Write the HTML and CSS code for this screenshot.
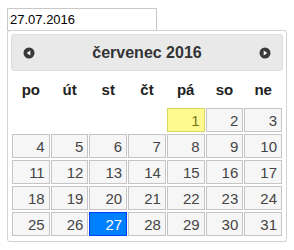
FILE: index.html
```html
<!DOCTYPE html>
<html lang="cs">
<head>
    <meta charset="UTF-8">
    <title>Datepicker</title>
    <link rel="stylesheet" href="styles.css">
</head>
<body>
    <input type="text" class="date-input" value="27.07.2016">

    <div class="datepicker">
        <div class="dp-header">
            <a href="#" class="dp-nav dp-prev" title="Předchozí">
                <svg width="12" height="12" viewBox="0 0 12 12"><circle cx="6" cy="6" r="5.5" fill="#3a3a3a"/><path d="M3.8 6 L7.3 3.6 L7.3 8.4 Z" fill="#fff"/></svg>
            </a>
            <div class="dp-title">červenec 2016</div>
            <a href="#" class="dp-nav dp-next" title="Další">
                <svg width="12" height="12" viewBox="0 0 12 12"><circle cx="6" cy="6" r="5.5" fill="#3a3a3a"/><path d="M8.2 6 L4.7 3.6 L4.7 8.4 Z" fill="#fff"/></svg>
            </a>
        </div>

        <div class="dp-weekdays">
            <span>po</span><span>út</span><span>st</span><span>čt</span><span>pá</span><span>so</span><span>ne</span>
        </div>

        <div class="dp-days">
            <span class="empty"></span><span class="empty"></span><span class="empty"></span><span class="empty"></span>
            <a href="#" class="day today">1</a><a href="#" class="day">2</a><a href="#" class="day">3</a>
            <a href="#" class="day">4</a><a href="#" class="day">5</a><a href="#" class="day">6</a><a href="#" class="day">7</a>
            <a href="#" class="day">8</a><a href="#" class="day">9</a><a href="#" class="day">10</a>
            <a href="#" class="day">11</a><a href="#" class="day">12</a><a href="#" class="day">13</a><a href="#" class="day">14</a>
            <a href="#" class="day">15</a><a href="#" class="day">16</a><a href="#" class="day">17</a>
            <a href="#" class="day">18</a><a href="#" class="day">19</a><a href="#" class="day">20</a><a href="#" class="day">21</a>
            <a href="#" class="day">22</a><a href="#" class="day">23</a><a href="#" class="day">24</a>
            <a href="#" class="day">25</a><a href="#" class="day">26</a><a href="#" class="day selected">27</a><a href="#" class="day">28</a>
            <a href="#" class="day">29</a><a href="#" class="day">30</a><a href="#" class="day">31</a>
        </div>
    </div>
</body>
</html>
```

FILE: styles.css
```css
/* Page */
body {
    margin: 8px 7px;
    font-family: "Liberation Sans", Arial, sans-serif;
    background: #fff;
}

/* Text input */
.date-input {
    display: block;
    box-sizing: border-box;
    width: 150px;
    height: 23px;
    margin: 0;
    padding: 1px 2px;
    border: 1px solid #c8c8c8;
    font-family: "Liberation Sans", Arial, sans-serif;
    font-size: 13px;
    color: #000;
}

/* Calendar widget */
.datepicker {
    box-sizing: border-box;
    width: 280px;
    margin-top: -1px;
    padding: 3px 3px 5px;
    border: 1px solid #d2d2d2;
    border-radius: 3px;
    background: #fff;
    box-shadow: 1px 1px 2px rgba(0, 0, 0, 0.08);
}

.dp-header {
    display: flex;
    align-items: center;
    height: 37px;
    box-sizing: border-box;
    border: 1px solid #dddddd;
    border-radius: 3px;
    background: #e9e9e9;
    color: #333;
}

.dp-title {
    flex: 1;
    text-align: center;
    font-size: 16px;
    font-weight: bold;
}

.dp-nav {
    display: flex;
    width: 36px;
    justify-content: center;
    align-items: center;
}

.dp-prev {
    margin-left: -1px;
}

.dp-next {
    margin-right: -1px;
}

/* Weekday names */
.dp-weekdays {
    display: grid;
    grid-template-columns: repeat(7, 1fr);
    column-gap: 1px;
    height: 37px;
    margin: 0 1px;
    align-items: center;
    text-align: center;
    font-size: 15px;
    font-weight: bold;
    color: #222;
}

/* Day cells */
.dp-days {
    display: grid;
    grid-template-columns: repeat(7, 1fr);
    grid-auto-rows: 24px;
    gap: 2px 1px;
    margin: 0 1px;
}

.day {
    display: flex;
    align-items: center;
    justify-content: flex-end;
    padding-right: 4px;
    border: 1px solid #c5c5c5;
    background: #f6f6f6;
    color: #454545;
    font-size: 15px;
    text-decoration: none;
}

.day.today {
    border-color: #dad55e;
    background: #fffa90;
    color: #777620;
}

.day.selected {
    border-color: #003eff;
    background: #007fff;
    color: #fff;
}
```
